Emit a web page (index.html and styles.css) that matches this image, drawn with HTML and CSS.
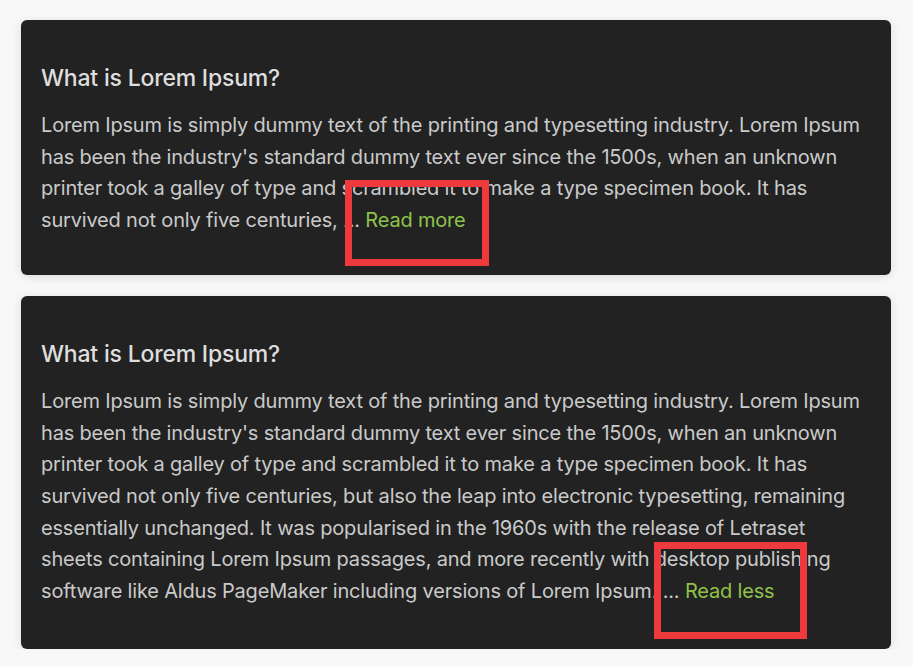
FILE: index.html
```html
<!DOCTYPE html>
<html lang="en">
<head>
<meta charset="utf-8">
<title>Read more</title>
<link rel="stylesheet" href="styles.css">
</head>
<body>
<main class="page">
  <article class="card">
    <h2 class="card-title">What is Lorem Ipsum?</h2>
    <p class="card-text">Lorem Ipsum is simply dummy text of the printing and typesetting industry. Lorem Ipsum has been the industry's standard dummy text ever since the 1500s, when an unknown printer took a galley of type and scrambled it to make a type specimen book. It has survived not only five centuries, <span class="dots">...</span> <a class="toggle" href="#">Read more</a></p>
  </article>
  <article class="card card-open">
    <h2 class="card-title">What is Lorem Ipsum?</h2>
    <p class="card-text">Lorem Ipsum is simply dummy text of the printing and typesetting industry. Lorem Ipsum has been the industry's standard dummy text ever since the 1500s, when an unknown printer took a galley of type and scrambled it to make a type specimen book. It has survived not only five centuries, but also the leap into electronic typesetting, remaining essentially unchanged. It was popularised in the 1960s with the release of Letraset sheets containing Lorem Ipsum passages, and more recently with desktop publishing software like Aldus PageMaker including versions of Lorem Ipsum. <span class="dots">...</span> <a class="toggle" href="#">Read less</a></p>
  </article>
  <div class="mark mark-one"></div>
  <div class="mark mark-two"></div>
</main>
</body>
</html>
```

FILE: styles.css
```css
html, body {
  margin: 0;
  padding: 0;
  background: #f8f8f8;
}

body {
  font-family: Inter, "Noto Sans", sans-serif;
}

.page {
  position: relative;
  width: 870px;
  padding: 20px 0 0 21px;
  display: flex;
  flex-direction: column;
  gap: 21px;
}

.card {
  background: #222222;
  border-radius: 6px;
  padding: 20px 24px 20px 20px;
  box-shadow: 0 2px 10px rgba(0, 0, 0, 0.12);
}

.card-title {
  margin: 24px 0 0 0;
  font-size: 23px;
  line-height: 29px;
  font-weight: 500;
  letter-spacing: -0.2px;
  color: #dedede;
}

.card-text {
  margin: 17px 0 18px 0;
  font-size: 20px;
  line-height: 31.7px;
  letter-spacing: -0.18px;
  color: #cacaca;
}

.card-open .card-text {
  margin-bottom: 21px;
}

.dots {
  color: #cacaca;
}

.toggle {
  color: #8fc24a;
  text-decoration: none;
}

.mark {
  position: absolute;
  border: 7px solid #ee3a3c;
  box-sizing: border-box;
  pointer-events: none;
}

.mark-one {
  left: 345px;
  top: 180px;
  width: 144px;
  height: 86px;
}

.mark-two {
  left: 654px;
  top: 542px;
  width: 153px;
  height: 97px;
}
```
